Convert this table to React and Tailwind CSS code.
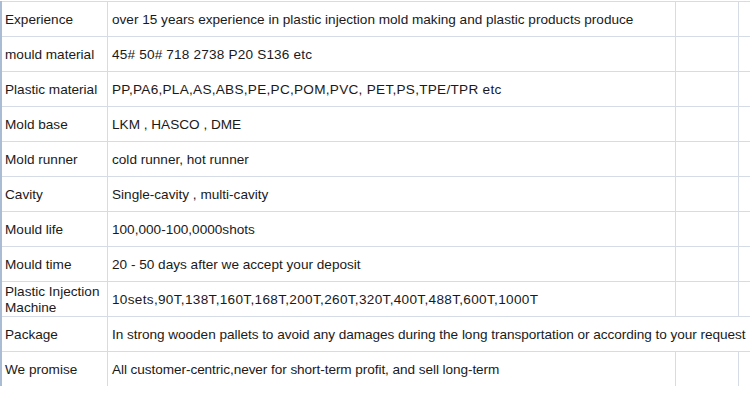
export default function App() {
  const rows = [
    ["Experience", "over 15 years experience in plastic injection mold making and plastic products produce", ""],
    ["mould material", "45# 50# 718 2738 P20 S136 etc", "tracking-[0.18px]"],
    ["Plastic material", "PP,PA6,PLA,AS,ABS,PE,PC,POM,PVC, PET,PS,TPE/TPR etc", "tracking-[0.27px]"],
    ["Mold base", "LKM , HASCO , DME", ""],
    ["Mold runner", "cold runner, hot runner", ""],
    ["Cavity", "Single-cavity , multi-cavity", ""],
    ["Mould life", "100,000-100,0000shots", ""],
    ["Mould time", "20 - 50 days after we accept your deposit", ""],
    ["Plastic Injection Machine", "10sets,90T,138T,160T,168T,200T,260T,320T,400T,488T,600T,1000T", "tracking-[0.31px]"],
    ["Package", "In strong wooden pallets to avoid any damages during the long transportation or according to your request", "", true],
    ["We promise", "All customer-centric,never for short-term profit, and sell long-term", "tracking-[-0.07px]"],
  ];
  return (
    <div className="w-[750px] h-[401px] bg-white overflow-hidden pt-px" style={{ fontFamily: '"Liberation Sans", Arial, sans-serif' }}>
      <div className="border-l-2 border-[#a9bcd3] w-[750px]">
        {rows.map(([a, b, tr, wide], i) => (
          <div key={i} className="flex h-[35px] text-[13.6px] text-[#1a1a1a] border-t border-[#d5dce6]">
            <div className="w-[106px] shrink-0 pl-[3px] pt-[2px] flex items-center leading-[16px] border-r border-[#d5dce6]">{a}</div>
            {wide ? (
              <div className="flex-1 pl-[4px] pt-[2px] flex items-center whitespace-nowrap overflow-hidden tracking-[-0.04px]">{b}</div>
            ) : (
              <>
                <div className={`w-[568px] shrink-0 pl-[4px] pt-[2px] flex items-center whitespace-nowrap border-r border-[#d5dce6] ${tr}`}>{b}</div>
                <div className="w-[63px] shrink-0 border-r border-[#d5dce6]"></div>
                <div className="flex-1"></div>
              </>
            )}
          </div>
        ))}
      </div>
    </div>
  );
}
